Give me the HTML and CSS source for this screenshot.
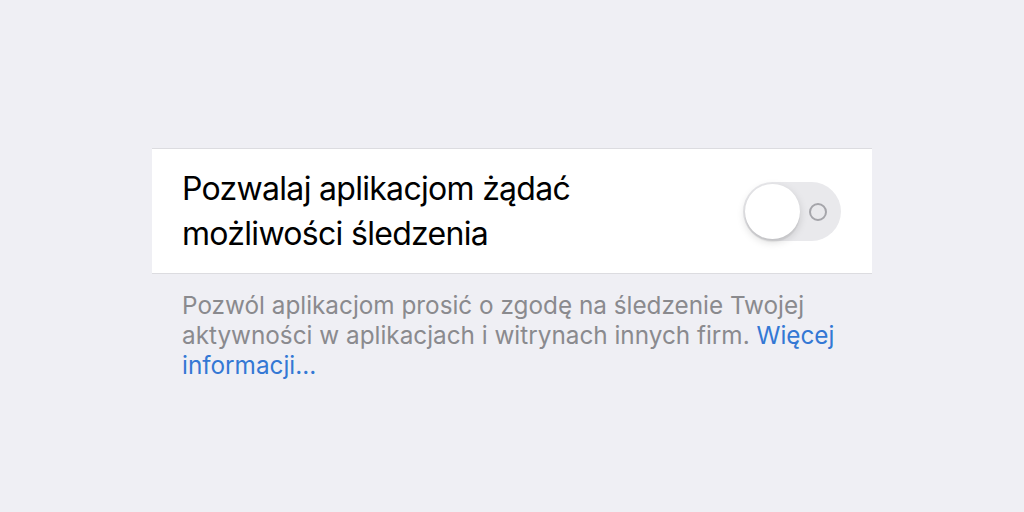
FILE: index.html
```html
<!DOCTYPE html>
<html lang="pl">
<head>
  <meta charset="UTF-8">
  <meta name="viewport" content="width=device-width, initial-scale=1.0">
  <title>Śledzenie</title>
  <link rel="stylesheet" href="styles.css">
</head>
<body>
  <main class="page">
    <section class="group">
      <div class="row">
        <span class="row-title">Pozwalaj aplikacjom żądać<br>możliwości śledzenia</span>
        <span class="switch" role="switch" aria-checked="false">
          <span class="switch-off"></span>
          <span class="switch-knob"></span>
        </span>
      </div>
    </section>
    <p class="group-footer">Pozwól aplikacjom prosić o zgodę na śledzenie Twojej aktywności w aplikacjach i witrynach innych firm. <a href="#">Więcej informacji…</a></p>
  </main>
</body>
</html>
```

FILE: styles.css
```css
* { margin: 0; padding: 0; box-sizing: border-box; }
body { background: #efeff4; font-family: 'Inter', 'Liberation Sans', sans-serif; color: #000; }
.page { width: 720px; margin: 0 auto; padding-top: 148px; }
.group { background: #fff; border-top: 1px solid #dcdce0; border-bottom: 1px solid #dcdce0; }
.row { display: flex; align-items: center; justify-content: space-between; height: 124px; padding: 0 31px 0 30px; }
.row-title { font-size: 32px; line-height: 45px; letter-spacing: -0.7px; }
.switch { position: relative; width: 98px; height: 59px; border-radius: 30px; background: #e9e9ec; }
.switch-off { position: absolute; right: 14px; top: 21px; width: 18px; height: 18px; border: 2px solid #a5a5aa; border-radius: 50%; }
.switch-knob { position: absolute; left: 2px; top: 2px; width: 55px; height: 55px; border-radius: 50%; background: #fff; box-shadow: 0 3px 8px rgba(0,0,0,0.15), 0 3px 1px rgba(0,0,0,0.06); }
.group-footer { padding: 16px 30px 0 30px; font-size: 24.3px; line-height: 30px; color: #8a8a8e; }
.group-footer a { color: #3478d4; text-decoration: none; }
```
